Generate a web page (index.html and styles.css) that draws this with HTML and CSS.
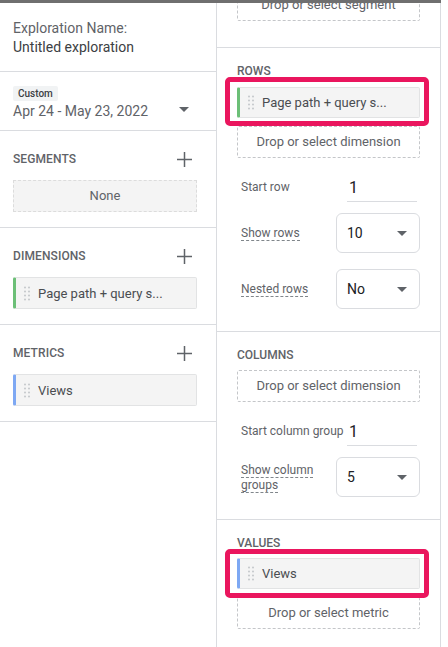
FILE: index.html
```html
<!DOCTYPE html>
<html>
<head>
<meta charset="utf-8">
<link rel="stylesheet" href="styles.css">
</head>
<body>
<div class="app">
  <div class="topbar"></div>
  <div class="panels">
    <aside class="left">
      <div class="lsec name-sec">
        <div class="name-label">Exploration Name:</div>
        <div class="name-value">Untitled exploration</div>
      </div>
      <div class="lsec date-sec">
        <div class="custom-chip">Custom</div>
        <div class="date-row">
          <span class="date-text">Apr 24 - May 23, 2022</span>
          <svg class="caret caret-date" width="10" height="5" viewBox="0 0 10 5"><path d="M0 0h10L5 5z" fill="#5f6368"/></svg>
        </div>
      </div>
      <div class="lsec group">
        <div class="ghead">
          <span class="gtitle">SEGMENTS</span>
          <svg class="plus" width="15" height="15" viewBox="0 0 15 15"><path d="M7.5 0v15M0 7.5h15" stroke="#5f6368" stroke-width="1.5"/></svg>
        </div>
        <div class="none-box">None</div>
      </div>
      <div class="lsec group">
        <div class="ghead">
          <span class="gtitle">DIMENSIONS</span>
          <svg class="plus" width="15" height="15" viewBox="0 0 15 15"><path d="M7.5 0v15M0 7.5h15" stroke="#5f6368" stroke-width="1.5"/></svg>
        </div>
        <div class="chip chip-dim">
          <svg class="handle" width="6" height="15" viewBox="0 0 6 15"><g fill="#c4c7cb"><circle cx="1" cy="1.5" r="1"/><circle cx="5" cy="1.5" r="1"/><circle cx="1" cy="5.5" r="1"/><circle cx="5" cy="5.5" r="1"/><circle cx="1" cy="9.5" r="1"/><circle cx="5" cy="9.5" r="1"/><circle cx="1" cy="13.5" r="1"/><circle cx="5" cy="13.5" r="1"/></g></svg>
          <span>Page path + query s...</span>
        </div>
      </div>
      <div class="lsec group">
        <div class="ghead">
          <span class="gtitle">METRICS</span>
          <svg class="plus" width="15" height="15" viewBox="0 0 15 15"><path d="M7.5 0v15M0 7.5h15" stroke="#5f6368" stroke-width="1.5"/></svg>
        </div>
        <div class="chip chip-met">
          <svg class="handle" width="6" height="15" viewBox="0 0 6 15"><g fill="#c4c7cb"><circle cx="1" cy="1.5" r="1"/><circle cx="5" cy="1.5" r="1"/><circle cx="1" cy="5.5" r="1"/><circle cx="5" cy="5.5" r="1"/><circle cx="1" cy="9.5" r="1"/><circle cx="5" cy="9.5" r="1"/><circle cx="1" cy="13.5" r="1"/><circle cx="5" cy="13.5" r="1"/></g></svg>
          <span>Views</span>
        </div>
      </div>
    </aside>

    <section class="right">
      <div class="rsec seg-sec">
        <div class="drop-box seg-box">Drop or select segment</div>
      </div>

      <div class="rsec">
        <div class="rtitle">ROWS</div>
        <div class="hl-wrap hl-rows">
          <div class="chip chip-dim">
            <svg class="handle" width="6" height="15" viewBox="0 0 6 15"><g fill="#c4c7cb"><circle cx="1" cy="1.5" r="1"/><circle cx="5" cy="1.5" r="1"/><circle cx="1" cy="5.5" r="1"/><circle cx="5" cy="5.5" r="1"/><circle cx="1" cy="9.5" r="1"/><circle cx="5" cy="9.5" r="1"/><circle cx="1" cy="13.5" r="1"/><circle cx="5" cy="13.5" r="1"/></g></svg>
            <span>Page path + query s...</span>
          </div>
        </div>
        <div class="drop-box after-chip">Drop or select dimension</div>
        <div class="field-row">
          <span class="flabel">Start row</span>
          <span class="num-input">1</span>
        </div>
        <div class="sel-row first-sel">
          <span class="slabel"><span class="dotted">Show rows</span></span>
          <div class="select"><span>10</span><svg class="caret" width="10" height="5" viewBox="0 0 10 5"><path d="M0 0h10L5 5z" fill="#5f6368"/></svg></div>
        </div>
        <div class="sel-row next-sel">
          <span class="slabel"><span class="dotted">Nested rows</span></span>
          <div class="select"><span>No</span><svg class="caret" width="10" height="5" viewBox="0 0 10 5"><path d="M0 0h10L5 5z" fill="#5f6368"/></svg></div>
        </div>
      </div>

      <div class="rsec">
        <div class="rtitle">COLUMNS</div>
        <div class="drop-box after-title">Drop or select dimension</div>
        <div class="field-row">
          <span class="flabel">Start column group</span>
          <span class="num-input">1</span>
        </div>
        <div class="sel-row first-sel">
          <span class="slabel"><span class="dotted">Show column groups</span></span>
          <div class="select"><span>5</span><svg class="caret" width="10" height="5" viewBox="0 0 10 5"><path d="M0 0h10L5 5z" fill="#5f6368"/></svg></div>
        </div>
      </div>

      <div class="rsec last">
        <div class="rtitle">VALUES</div>
        <div class="hl-wrap hl-values">
          <div class="chip chip-met">
            <svg class="handle" width="6" height="15" viewBox="0 0 6 15"><g fill="#c4c7cb"><circle cx="1" cy="1.5" r="1"/><circle cx="5" cy="1.5" r="1"/><circle cx="1" cy="5.5" r="1"/><circle cx="5" cy="5.5" r="1"/><circle cx="1" cy="9.5" r="1"/><circle cx="5" cy="9.5" r="1"/><circle cx="1" cy="13.5" r="1"/><circle cx="5" cy="13.5" r="1"/></g></svg>
            <span>Views</span>
          </div>
        </div>
        <div class="drop-box after-chip">Drop or select metric</div>
      </div>
    </section>
  </div>
</div>
</body>
</html>
```

FILE: styles.css
```css
* { box-sizing: border-box; }
html, body { margin: 0; padding: 0; background: #ffffff; }
body {
  font-family: Roboto, "Liberation Sans", Arial, sans-serif;
  color: #5f6368;
  width: 448px;
  height: 647px;
  overflow: hidden;
}
.app { width: 441px; }
.topbar { height: 3px; background: #6f6f6f; }
.panels { display: flex; height: 644px; }

/* left panel */
.left {
  width: 217px;
  flex: none;
  border-right: 1px solid #dadce0;
}
.lsec {
  border-bottom: 1px solid #dadce0;
  padding-left: 13px;
  padding-right: 19px;
}
.name-sec { padding-top: 16px; padding-bottom: 14px; font-size: 14px; line-height: 19px; }
.name-label { color: #5f6368; }
.name-value { color: #3c4043; }
.date-sec { padding-top: 14px; padding-bottom: 10px; }
.custom-chip {
  width: fit-content;
  height: 15px;
  line-height: 15px;
  padding: 0 5px;
  font-size: 10px;
  font-weight: 500;
  color: #3c4043;
  background: #f1f3f4;
  border-radius: 2px;
}
.date-row {
  display: flex;
  align-items: center;
  justify-content: space-between;
  height: 18px;
  margin-top: 1px;
}
.date-text { font-size: 14px; color: #5f6368; line-height: 18px; }
.caret-date { margin-right: 8px; margin-top: -3px; }

.group { padding-top: 18px; padding-bottom: 15px; }
.ghead {
  display: flex;
  align-items: center;
  justify-content: space-between;
  height: 20px;
  margin-bottom: 11px;
}
.gtitle { font-size: 12px; font-weight: 500; color: #5f6368; letter-spacing: 0.1px; }
.plus { margin-right: 5px; }
.none-box {
  height: 32px;
  line-height: 30px;
  text-align: center;
  font-size: 13px;
  color: #5f6368;
  background: #f4f4f4;
  border: 1px dashed #dcdcdc;
}

.chip {
  height: 31px;
  display: flex;
  align-items: center;
  gap: 8px;
  padding-left: 8px;
  background: #f4f4f4;
  border: 1px solid #e2e3e4;
  border-left: 3px solid #6cbf77;
  border-radius: 2px;
  font-size: 13px;
  color: #4a4d51;
}
.group .chip { height: 32px; }
.chip-met { border-left-color: #7ea8f3; }
.handle { flex: none; }

/* right panel */
.right {
  width: 224px;
  flex: none;
  border-right: 1px solid #dadce0;
  overflow: hidden;
}
.rsec {
  border-bottom: 1px solid #dadce0;
  padding: 15px 20px 22px 20px;
}
.rsec.last { border-bottom: none; }
.seg-sec { padding-top: 0; padding-bottom: 26px; }
.seg-box { margin-top: -14px; }
.rtitle {
  font-size: 12px;
  font-weight: 500;
  line-height: 16px;
  color: #5f6368;
}
.drop-box {
  height: 32px;
  line-height: 30px;
  text-align: center;
  font-size: 13px;
  color: #5f6368;
  border: 1px dashed #c4c6c9;
  border-radius: 2px;
}
.after-chip { margin-top: 8px; }
.after-title { margin-top: 7px; }

.hl-wrap { position: relative; margin-top: 8px; }
.hl-values { margin-top: 7px; }
.hl-wrap::before {
  content: "";
  position: absolute;
  top: -10px;
  bottom: -8px;
  left: -12px;
  right: -9px;
  border: 5px solid #ea165e;
  border-radius: 5px;
}
.hl-values::before { top: -9px; bottom: -9px; }

.field-row {
  display: flex;
  align-items: center;
  height: 32px;
  margin-top: 12px;
  padding-left: 4px;
}
.flabel {
  width: 106px;
  flex: none;
  font-size: 12px;
  color: #5f6368;
  white-space: nowrap;
  padding-top: 2px;
}
.num-input {
  width: 70px;
  height: 32px;
  padding-top: 4px;
  padding-left: 2px;
  display: flex;
  align-items: center;
  font-size: 16px;
  color: #202124;
  border-bottom: 1px solid #dadce0;
}

.sel-row {
  display: flex;
  align-items: center;
  padding-left: 4px;
}
.first-sel { margin-top: 11px; }
.next-sel { margin-top: 16px; }
.slabel {
  width: 95px;
  flex: none;
  font-size: 12px;
  line-height: 15px;
  color: #5f6368;
  padding-right: 16px;
  padding-top: 1px;
}
.dotted { border-bottom: 1px dashed #80868b; }
.select {
  width: 84px;
  height: 40px;
  display: flex;
  align-items: center;
  justify-content: space-between;
  padding: 0 12px 0 10px;
  border: 1px solid #dadce0;
  border-radius: 6px;
  font-size: 14px;
  color: #202124;
}
```
